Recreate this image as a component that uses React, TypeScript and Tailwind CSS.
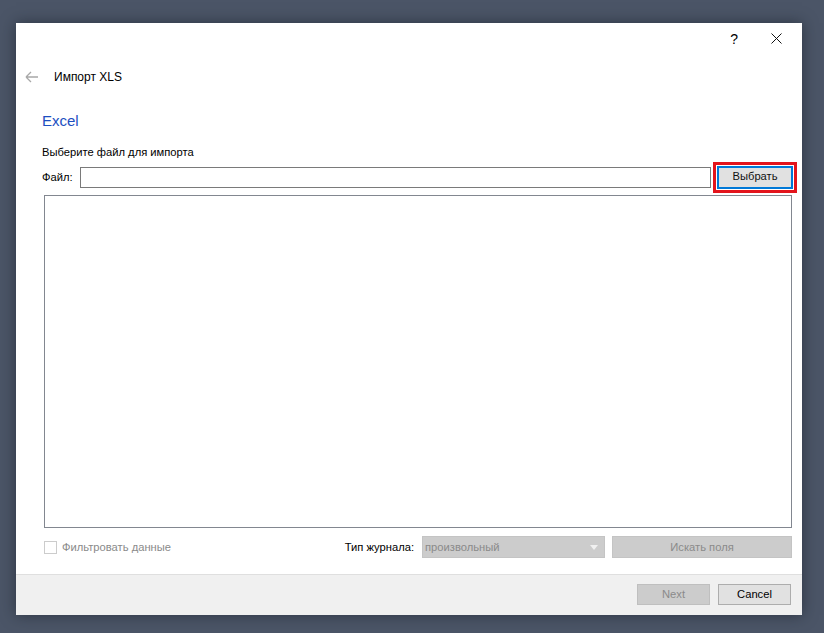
import React from "react";

export default function App() {
  const font = { fontFamily: '"Liberation Sans", "Noto Sans", sans-serif' };
  return (
    <div className="w-[824px] h-[633px] bg-[#4b5567] pl-[16px] pt-[23px] overflow-hidden" style={font}>
      <div className="w-[786px] h-[592px] bg-white flex flex-col shadow-[0_0_14px_rgba(20,25,35,0.55)] text-[11.2px] text-black">
        {/* title bar */}
        <div className="h-[30px] flex items-center justify-end">
          <span className="text-[14px] leading-none mr-[33px] mt-[1px]">?</span>
          <svg width="11" height="11" viewBox="0 0 11 11" className="mr-[20px]">
            <path d="M0.5 0.5 L10.5 10.5 M10.5 0.5 L0.5 10.5" stroke="#111" strokeWidth="1" />
          </svg>
        </div>
        {/* header */}
        <div className="h-[48px] flex items-center">
          <svg width="14" height="12" viewBox="0 0 14 12" className="ml-[9px]">
            <path d="M1 6 H13 M1 6 L6 1 M1 6 L6 11" stroke="#a8a8a8" strokeWidth="1.3" fill="none" />
          </svg>
          <span className="ml-[15px] leading-[16px] text-[12px]">Импорт XLS</span>
        </div>
        {/* body */}
        <div className="flex flex-col pl-[26px] pr-[10px]">
          <div className="pt-[10px] h-[29px] text-[15px] leading-[19px] text-[#1c4fc1]">Excel</div>
          <div className="mt-[15px] leading-[15px]">Выберите файл для импорта</div>
          <div className="h-[34px] flex items-center">
            <span className="shrink-0 w-[38px] leading-[16px]">Файл:</span>
            <div className="shrink-0 w-[631px] h-[21px] border border-[#7a7a7a] bg-white" />
            <div className="shrink-0 ml-[2px] w-[84px] h-[31px] border-[3px] border-[#e3141c] p-[1px] bg-white">
              <div className="w-full h-full border-2 border-[#0078d7] bg-[#e1e1e1] flex items-center justify-center leading-none text-[#111]">
                Выбрать
              </div>
            </div>
          </div>
          <div className="ml-[2px] mt-[1px] h-[333px] border border-[#828790] bg-white" />
          <div className="ml-[2px] mt-[8px] h-[22px] flex items-center">
            <div className="w-[13px] h-[13px] border border-[#cccccc] bg-white" />
            <span className="ml-[5px] text-[#8a8a8a]">Фильтровать данные</span>
            <span className="ml-auto mr-[8px]">Тип журнала:</span>
            <div className="w-[183px] h-[22px] bg-[#cccccc] border border-[#c4c4c4] flex items-center pl-[2px] pr-[6px]">
              <span className="text-[#8a8a8a] flex-1">произвольный</span>
              <svg width="8" height="5" viewBox="0 0 8 5">
                <path d="M0 0 H8 L4 5 Z" fill="#f0f0f0" />
              </svg>
            </div>
            <div className="ml-[7px] w-[180px] h-[22px] bg-[#cccccc] border border-[#c4c4c4] flex items-center justify-center text-[#8a8a8a]">
              Искать поля
            </div>
          </div>
        </div>
        {/* footer */}
        <div className="mt-auto h-[41px] bg-[#f0f0f0] border-t border-[#dfdfdf] flex items-start justify-end pt-[9px] pr-[11px] gap-[8px]">
          <div className="w-[73px] h-[21px] bg-[#cccccc] border border-[#bfbfbf] flex items-center justify-center text-[#8a8a8a]">
            Next
          </div>
          <div className="w-[73px] h-[21px] bg-[#e1e1e1] border border-[#adadad] flex items-center justify-center">
            Cancel
          </div>
        </div>
      </div>
    </div>
  );
}
